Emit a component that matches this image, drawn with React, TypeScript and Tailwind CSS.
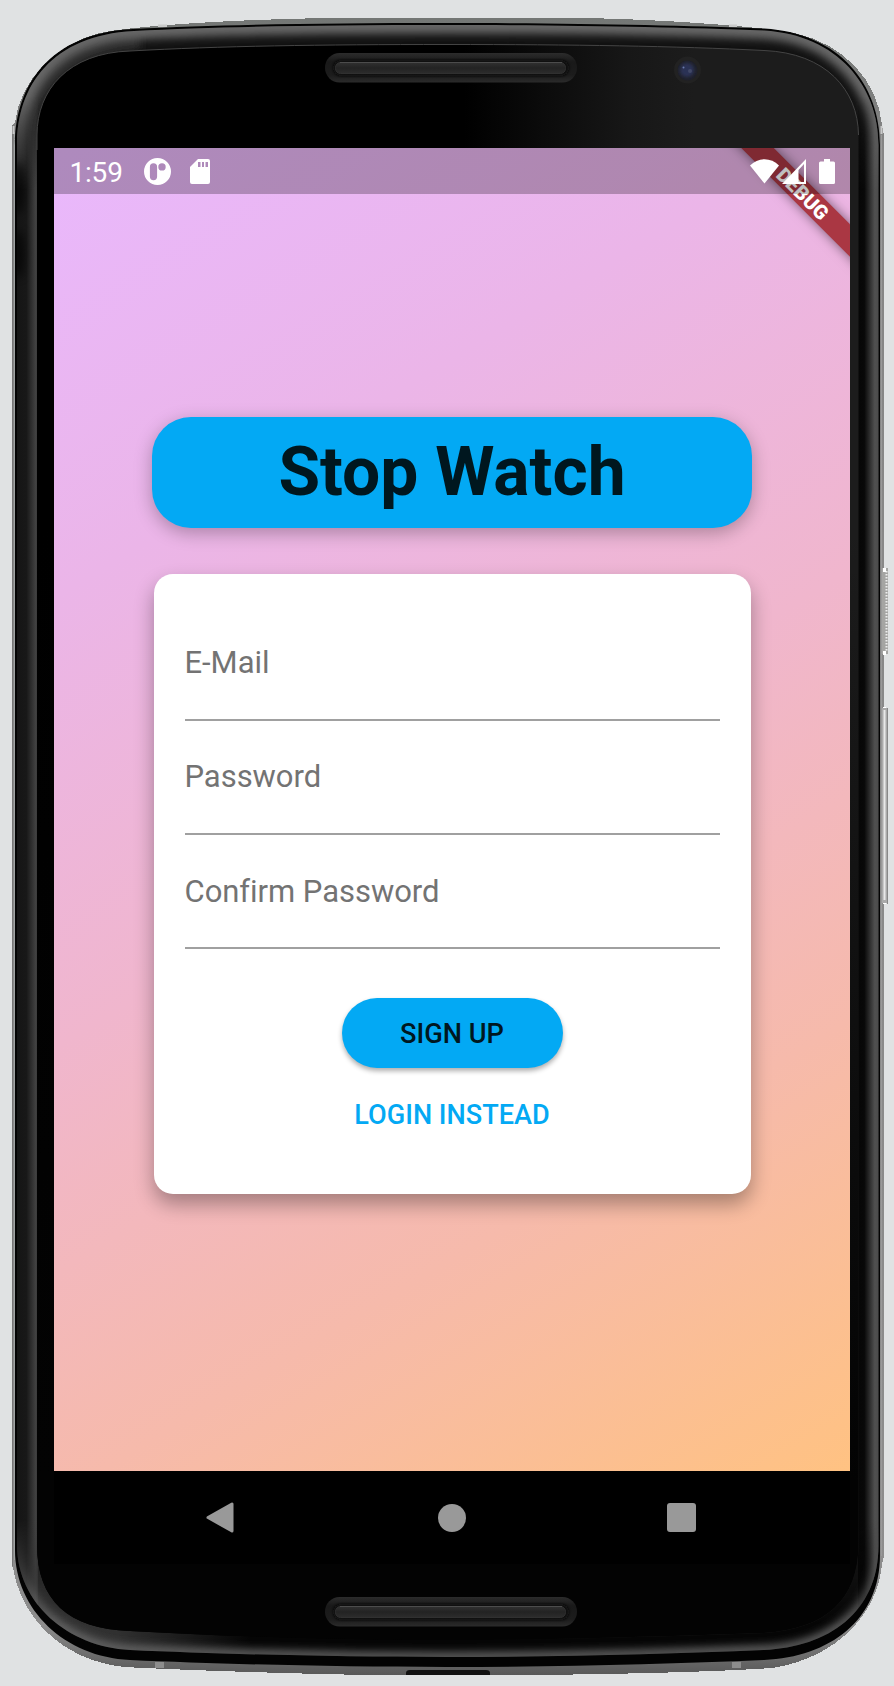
import React from 'react';

const OUTER = 'M12 125 L15 122 C20 82 54 44 100 33 C130 26 250 18 350 18 L572 18 C640 18 760 26 794 33 C845 44 878 82 882 125 L884 135 L884 1556 L882 1564 C878 1612 838 1658 772 1668 C700 1673 560 1675 520 1675 L372 1675 C300 1674 180 1670 124 1667 C60 1660 20 1615 13 1567 L12 1567 Z';
const EDGE = 'M15 145 C15 85 50 33 133 29 C220 24.5 320 23 447 23 C574 23 674 25 764 28.500 C840 33 880 85 880 145 L880 1555 C880 1620 830 1657 764 1660 C670 1664 560 1667 447 1667 C334 1667 220 1664 130 1660 C65 1657 15 1610 15 1550 Z';
const BEZEL = 'M17 145 C17 86 52 35 134 31 C220 26.500 320 25 447 25 C574 25 674 27 764 30.500 C838 35 878.500 86 878.500 145 L878.500 1545 C878.500 1613 828 1647 764 1650 C670 1654 560 1657 447 1657 C334 1657 220 1654 130 1650 C68 1647 17 1603 17 1545 Z';
const INNER = 'M37 135 C37 90 68 53 130 51 C220 46 320 44.500 447 44.500 C574 44.500 674 46 764 50.500 C826 53 858 90 858.500 135 L858.500 1545 C858 1600 826 1629 764 1633 C670 1636 560 1640 447 1640 C334 1640 220 1636 130 1631 C68 1629 37 1600 37 1545 Z';

function Grille({ y }: { y: number }) {
  return (
    <g>
      <rect x="325" y={y} width="252" height="29.500" rx="14.700" fill="url(#slot)" />
      <rect x="333" y={y + 7} width="236" height="16" rx="8" fill="#0b0b0b" filter="url(#soft1)" />
      <rect x="335.500" y={y + 9.500} width="230" height="11" rx="5" fill="url(#bar)" stroke="#303030" strokeWidth="1" />
      <path d={`M340 ${y + 9.500}H562`} stroke="#4c4c4c" strokeWidth="1" />
    </g>
  );
}

function PhoneBody() {
  return (
    <svg className="absolute inset-0 h-full w-full" viewBox="0 0 894 1686" aria-hidden="true">
      <defs>
        <linearGradient id="slot" x2="0" y2="1">
          <stop stopColor="#2c2c2c" />
          <stop offset=".3" stopColor="#191919" />
          <stop offset=".75" stopColor="#1c1c1c" />
          <stop offset="1" stopColor="#2b2b2b" />
        </linearGradient>
        <linearGradient id="bar" x2="0" y2="1">
          <stop stopColor="#303030" />
          <stop offset=".5" stopColor="#232323" />
          <stop offset="1" stopColor="#2c2c2c" />
        </linearGradient>
        <linearGradient id="left">
          <stop stopColor="#151515" />
          <stop offset=".45" stopColor="#181818" />
          <stop offset=".9" stopColor="#424242" />
          <stop offset="1" stopColor="#333" />
        </linearGradient>
        <linearGradient id="right">
          <stop stopColor="#060606" />
          <stop offset=".3" stopColor="#080808" />
          <stop offset=".8" stopColor="#505050" />
          <stop offset="1" stopColor="#4b4b4b" />
        </linearGradient>
        <linearGradient id="glassTop">
          <stop offset=".52" stopColor="#000" />
          <stop offset=".72" stopColor="#171717" />
          <stop offset=".8" stopColor="#1c1c1c" />
        </linearGradient>
        <linearGradient id="glassFade" x2="0" y2="1">
          <stop offset=".3" stopColor="#030303" stopOpacity="0" />
          <stop offset=".9" stopColor="#030303" />
        </linearGradient>
        <linearGradient id="rim" x2="0" y2="1">
          <stop stopColor="#747775" />
          <stop offset=".08" stopColor="#858585" />
          <stop offset=".97" stopColor="#8d8d8d" />
          <stop offset="1" stopColor="#585858" />
        </linearGradient>
        <linearGradient id="footLeft" gradientUnits="userSpaceOnUse" x1="30" y1="0" x2="250" y2="0">
          <stop stopColor="#343434" />
          <stop offset=".4" stopColor="#303030" />
          <stop offset="1" stopColor="#050505" />
        </linearGradient>
        <linearGradient id="fadeEdge" gradientUnits="userSpaceOnUse" x1="0" y1="20" x2="0" y2="190">
          <stop stopColor="#fff" />
          <stop offset=".45" stopColor="#fff" />
          <stop offset="1" stopColor="#000" />
        </linearGradient>
        <linearGradient id="fadeFoot" gradientUnits="userSpaceOnUse" x1="0" y1="1520" x2="0" y2="1625">
          <stop stopColor="#000" />
          <stop offset="1" stopColor="#fff" />
        </linearGradient>
        <mask id="topOnly" maskUnits="userSpaceOnUse" x="0" y="0" width="894" height="1686">
          <rect width="894" height="190" fill="url(#fadeEdge)" />
        </mask>
        <mask id="footOnly" maskUnits="userSpaceOnUse" x="0" y="0" width="894" height="1686">
          <rect y="1500" width="894" height="186" fill="url(#fadeFoot)" />
        </mask>
        <clipPath id="bezelClip"><path d={BEZEL} /></clipPath>
        <filter id="soft1"><feGaussianBlur stdDeviation="1.500" /></filter>
        <filter id="soft4" filterUnits="userSpaceOnUse" x="0" y="0" width="894" height="1686"><feGaussianBlur stdDeviation="4" /></filter>
      </defs>
      <path d={OUTER} fill="url(#rim)" shapeRendering="crispEdges" />
      <path d="M12.500 125V1566" stroke="#777" />
      <path d="M14.500 132V1560" stroke="#a0a4a4" />
      <path d="M881.500 135V1556" stroke="#999" />
      <path d={EDGE} fill="#030303" />
      <g clipPath="url(#bezelClip)">
        <rect width="894" height="1686" fill="#1b1b1b" />
        <rect x="17" width="21" height="1686" fill="url(#left)" />
        <rect x="858" width="21" height="1686" fill="url(#right)" />
        <g mask="url(#topOnly)">
          <rect width="894" height="190" fill="#111" />
          <path d="M27 190V135C30 85 70 45 140 40" fill="none" stroke="#2c2c2c" strokeWidth="20" filter="url(#soft4)" />
          <path d={BEZEL} fill="none" stroke="#686868" strokeWidth="17" filter="url(#soft4)" />
        </g>
        <g mask="url(#footOnly)">
          <rect y="1500" width="894" height="186" fill="url(#footLeft)" />
          <path d={BEZEL} fill="none" stroke="#686868" strokeWidth="9" filter="url(#soft4)" />
        </g>
        <g opacity=".7">
          <ellipse cx="19" cy="188" rx="5" ry="26" fill="#000" filter="url(#soft4)" />
          <ellipse cx="19" cy="254" rx="5" ry="24" fill="#000" filter="url(#soft4)" />
        </g>
      </g>
      <path d={INNER} fill="url(#glassTop)" />
      <path d={INNER} fill="url(#glassFade)" />
      <path d="M37 150V135C37 90 68 53 130 51C220 46 320 44.500 447 44.500C574 44.500 674 46 764 50.500C826 53 858 90 858.500 135" fill="none" stroke="#444" strokeWidth="1" />
      <Grille y={53} />
      <Grille y={1597} />
      <circle cx="687.500" cy="70" r="13.500" fill="#222" />
      <circle cx="687.500" cy="70.500" r="10" fill="#1f212c" />
      <circle cx="687" cy="70" r="7" fill="#2a3354" filter="url(#soft1)" />
      <circle cx="683.500" cy="67.500" r="1" fill="#6b7aac" />
      <circle cx="690" cy="71" r="2" fill="#414867" />
      <g fill="#c9caca">
        <path d="M158 24.500h9v2.500h-9zM729 24.500h8v2.500h-8zM12.500 126h2v8h-2zM880.500 126h2v8h-2z" />
      </g>
      <path d="M155 1662h9v6h-9zM732 1662h9v6h-9z" fill="#8d8d8d" />
      <path d="M406 1675V1673Q406 1670 410 1670H486Q490 1670 490 1673V1675Z" fill="#111" />
      <path d="M882 532h2v34h-2z" fill="#888" />
      <rect x="882" y="568" width="6" height="86" fill="#a5a5a3" />
      <path d="M886.500 571V652" stroke="#eee" strokeWidth="2" strokeDasharray="1.500 1.500" />
      <path d="M883 570h3M883 653h3M883 709h3M883 902h3" stroke="#fff" strokeWidth="4" />
      <path d="M882 708h5v195h-5z" fill="#aaa" />
      <path d="M884.500 710V900" stroke="#e8e8e8" strokeWidth="2" />
      <path d="M887.500 708V904" stroke="#888" />
    </svg>
  );
}

function StatusBar() {
  return (
    <div className="relative flex h-[46.300px] items-center bg-black/25 pl-[15.500px] pr-[15px] text-white">
      <span className="w-[74.500px] pt-[3px] text-[28px] leading-[43px] tracking-[-0.200px]">1:59</span>
      <svg className="h-[27px] w-[27px]" viewBox="0 0 27 27">
        <path fillRule="evenodd" fill="white" d="M13.500 0a13.500 13.500 0 1 0 0 27a13.500 13.500 0 1 0 0-27M9.500 5.300a3.600 3.600 0 0 0-3.600 3.600v9.700a3.600 3.600 0 0 0 7.200 0V8.900a3.600 3.600 0 0 0-3.600-3.600M18 5.200a3.700 3.700 0 1 0 0 7.400a3.700 3.700 0 1 0 0-7.400" />
      </svg>
      <svg className="ml-[19px] h-[25px] w-5" viewBox="0 0 20 25">
        <path fillRule="evenodd" fill="white" d="M8 0H18Q20 0 20 2V23Q20 25 18 25H2Q0 25 0 23V8ZM8 3V8H10.500V3ZM12 3V8H14V3ZM15.500 3V8H18V3Z" />
      </svg>
      <svg className="ml-auto h-[25px] w-[29px]" viewBox="0 0 29 25">
        <path fill="white" d="M0 6.500C8-2 21-2 29 6.500L14.500 24.500Z" />
      </svg>
      <svg className="ml-[3px] h-[25px] w-6" viewBox="0 0 24 25">
        <path fillRule="evenodd" fill="white" d="M0 25L24 0V25ZM16.500 11V23H22V5Z" />
      </svg>
      <svg className="ml-[13px] h-[25px] w-4" viewBox="0 0 16 25">
        <path fill="white" d="M5 0h6v2.500h3.500Q16 2.500 16 4V23.500Q16 25 14.500 25H1.500Q0 25 0 23.500V4Q0 2.500 1.500 2.500H5Z" />
      </svg>
    </div>
  );
}

function Field({ label }: { label: string }) {
  return (
    <div className="flex h-[114.300px] flex-col border-b-2 border-[#a0a0a0] pt-[38.500px] text-[31px] leading-9 tracking-[-0.040px] text-[#737373]">
      {label}
    </div>
  );
}

export default function App() {
  return (
    <div className="relative h-[1686px] w-[894px] overflow-hidden bg-[#e0e2e3] font-['Roboto',sans-serif]">
      <PhoneBody />
      <main className="relative ml-[54px] flex w-[796px] flex-col pt-[148px]">
        <section className="relative flex h-[1323px] flex-col overflow-hidden bg-[linear-gradient(148.970deg,#e9b8fd_0%,#ebb5e8_25%,#f0b6cd_50%,#f6baab_75%,#ffc282_100%)]">
          <div className="absolute top-[34px] right-[-46px] flex h-[23px] w-[186px] rotate-45 items-center justify-center bg-[#aa3743] text-[20px] font-black text-white shadow-[0_0_12px_rgba(0,0,0,0.5)]">
            DEBUG
          </div>
          <StatusBar />
          <h1 className="relative mx-[98px] mt-[223px] flex h-[110.700px] items-center justify-center rounded-[39px] bg-[#03a9f4] text-[67.700px] font-bold leading-none text-[#00171f] shadow-[0_5px_18px_rgba(0,0,0,0.28)]">
            Stop Watch
          </h1>
          <form className="relative mx-[99.500px] mt-[46px] flex h-[620px] flex-col rounded-[19px] bg-white px-[31px] pt-[32.500px] shadow-[0_10px_20px_rgba(0,0,0,0.33)]">
            <Field label="E-Mail" />
            <Field label="Password" />
            <Field label="Confirm Password" />
            <button type="button" className="mt-[48.500px] h-[70px] w-[221px] self-center rounded-full bg-[#03a9f4] pt-[3px] text-[27.200px] font-medium text-[#00171f] shadow-[0_3px_5px_rgba(0,0,0,0.32)]">
              SIGN UP
            </button>
            <button type="button" className="mt-[27.500px] h-10 self-center text-[27.100px] font-medium text-[#03a9f4]">
              LOGIN INSTEAD
            </button>
          </form>
        </section>
        <nav className="flex h-[93px] items-center bg-black pl-[152px]">
          <svg className="h-[31px] w-7" viewBox="0 0 28 31">
            <path d="M2 15.500L26 2V29Z" fill="#999" stroke="#999" strokeWidth="3" strokeLinejoin="round" />
          </svg>
          <div className="ml-[204px] h-7 w-7 rounded-full bg-[#999]" />
          <div className="ml-[201px] h-[29px] w-[29px] rounded-[3px] bg-[#999]" />
        </nav>
      </main>
    </div>
  );
}
